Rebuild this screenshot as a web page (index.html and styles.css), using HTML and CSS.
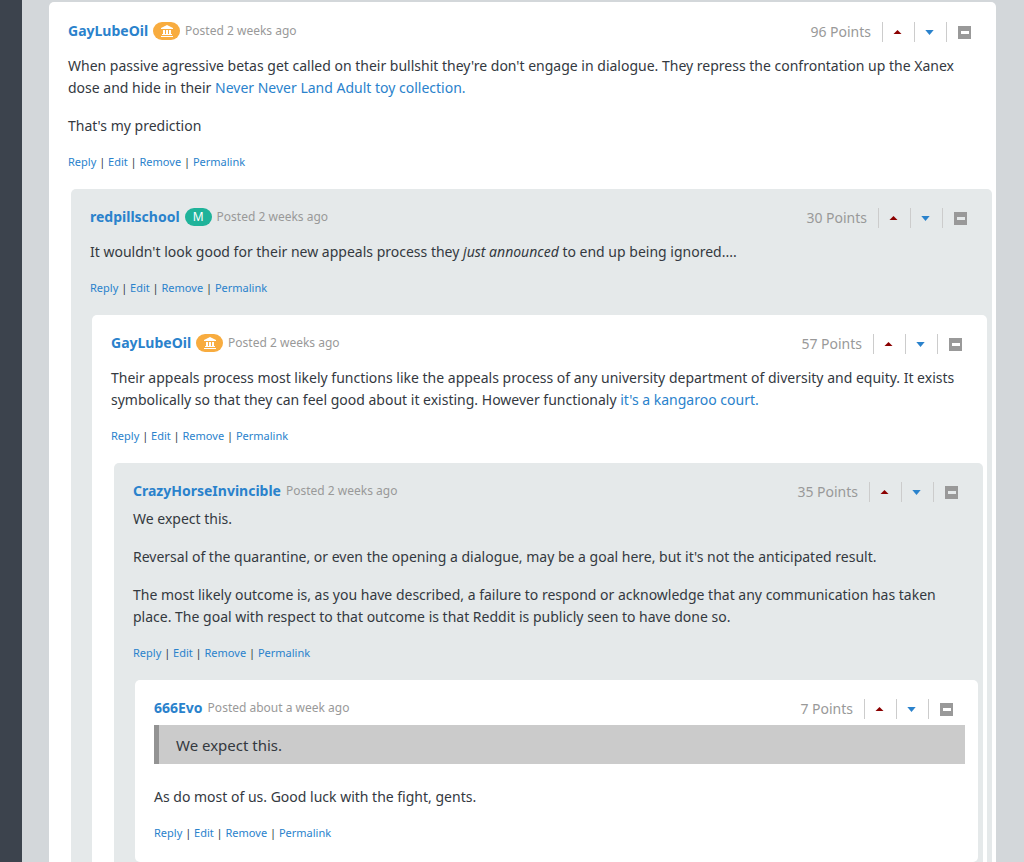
FILE: index.html
```html
<!DOCTYPE html>
<html lang="en">
  <head>
    <meta charset="UTF-8" />
    <meta name="viewport" content="width=device-width, initial-scale=1.0" />
    <title>Comments</title>
    <link rel="stylesheet" href="styles.css">
  </head>
  <body>
    <!-- Icons shared by every comment -->
    <svg class="sprite" aria-hidden="true">
      <symbol id="bank" viewBox="0 0 12 12">
        <path d="M6 0L12 3V4H0V3ZM2 5H4V9H5V5H7V9H8V5H10V9H11V10H1V9H2ZM0 11H12V12H0Z" />
      </symbol>
      <symbol id="up" viewBox="0 0 10 5"><path d="M5 0L10 5H0Z" /></symbol>
      <symbol id="down" viewBox="0 0 10 6"><path d="M0 0H10L5 6Z" /></symbol>
      <symbol id="minus" viewBox="0 0 13 13">
        <path fill-rule="evenodd" d="M0 0H13V13H0ZM3 5V8H11V5Z" />
      </symbol>
    </svg>

    <div class="sidebar"></div>
    <main class="content">
      <article class="comment">
        <header class="comment-header">
          <a class="author" href="#">GayLubeOil</a>
          <span class="badge gold"><svg class="bank"><use href="#bank" /></svg></span>
          <span class="posted">Posted 2 weeks ago</span>
          <div class="votes">
            <span class="points">96 Points</span>
            <button class="up" aria-label="Upvote"><svg><use href="#up" /></svg></button>
            <button class="down" aria-label="Downvote"><svg><use href="#down" /></svg></button>
            <button class="collapse" aria-label="Collapse"><svg><use href="#minus" /></svg></button>
          </div>
        </header>
        <div class="text spaced">
          <p>When passive agressive betas get called on their bullshit they're don't engage in dialogue. They repress the confrontation up the Xanex dose and hide in their <a href="#">Never Never Land Adult toy collection.</a></p>
          <p>That's my prediction</p>
        </div>
        <div class="actions"><a href="#">Reply</a> | <a href="#">Edit</a> | <a href="#">Remove</a> | <a href="#">Permalink</a></div>

        <article class="comment alt">
          <header class="comment-header">
            <a class="author" href="#">redpillschool</a>
            <span class="badge green">M</span>
            <span class="posted">Posted 2 weeks ago</span>
            <div class="votes">
              <span class="points">30 Points</span>
              <button class="up" aria-label="Upvote"><svg><use href="#up" /></svg></button>
              <button class="down" aria-label="Downvote"><svg><use href="#down" /></svg></button>
              <button class="collapse" aria-label="Collapse"><svg><use href="#minus" /></svg></button>
            </div>
          </header>
          <div class="text spaced">
            <p>It wouldn't look good for their new appeals process they <em>just announced</em> to end up being ignored....</p>
          </div>
          <div class="actions"><a href="#">Reply</a> | <a href="#">Edit</a> | <a href="#">Remove</a> | <a href="#">Permalink</a></div>

          <article class="comment">
            <header class="comment-header">
              <a class="author" href="#">GayLubeOil</a>
              <span class="badge gold"><svg class="bank"><use href="#bank" /></svg></span>
              <span class="posted">Posted 2 weeks ago</span>
              <div class="votes">
                <span class="points">57 Points</span>
                <button class="up" aria-label="Upvote"><svg><use href="#up" /></svg></button>
                <button class="down" aria-label="Downvote"><svg><use href="#down" /></svg></button>
                <button class="collapse" aria-label="Collapse"><svg><use href="#minus" /></svg></button>
              </div>
            </header>
            <div class="text spaced">
              <p>Their appeals process most likely functions like the appeals process of any university department of diversity and equity. It exists symbolically so that they can feel good about it existing. However functionaly <a href="#">it's a kangaroo court.</a></p>
            </div>
            <div class="actions"><a href="#">Reply</a> | <a href="#">Edit</a> | <a href="#">Remove</a> | <a href="#">Permalink</a></div>

            <article class="comment alt">
              <header class="comment-header">
                <a class="author" href="#">CrazyHorseInvincible</a>
                <span class="posted">Posted 2 weeks ago</span>
                <div class="votes">
                  <span class="points">35 Points</span>
                  <button class="up" aria-label="Upvote"><svg><use href="#up" /></svg></button>
                  <button class="down" aria-label="Downvote"><svg><use href="#down" /></svg></button>
                  <button class="collapse" aria-label="Collapse"><svg><use href="#minus" /></svg></button>
                </div>
              </header>
              <div class="text">
                <p>We expect this.</p>
                <p>Reversal of the quarantine, or even the opening a dialogue, may be a goal here, but it's not the anticipated result.</p>
                <p>The most likely outcome is, as you have described, a failure to respond or acknowledge that any communication has taken place. The goal with respect to that outcome is that Reddit is publicly seen to have done so.</p>
              </div>
              <div class="actions"><a href="#">Reply</a> | <a href="#">Edit</a> | <a href="#">Remove</a> | <a href="#">Permalink</a></div>

              <article class="comment">
                <header class="comment-header">
                  <a class="author" href="#">666Evo</a>
                  <span class="posted">Posted about a week ago</span>
                  <div class="votes">
                    <span class="points">7 Points</span>
                    <button class="up" aria-label="Upvote"><svg><use href="#up" /></svg></button>
                    <button class="down" aria-label="Downvote"><svg><use href="#down" /></svg></button>
                    <button class="collapse" aria-label="Collapse"><svg><use href="#minus" /></svg></button>
                  </div>
                </header>
                <div class="text">
                  <blockquote>We expect this.</blockquote>
                  <p>As do most of us. Good luck with the fight, gents.</p>
                </div>
                <div class="actions"><a href="#">Reply</a> | <a href="#">Edit</a> | <a href="#">Remove</a> | <a href="#">Permalink</a></div>
              </article>
            </article>
          </article>
        </article>
      </article>
    </main>
  </body>
</html>
```
FILE: styles.css
```css
* {
  box-sizing: border-box;
}
body {
  display: flex;
  min-height: 100vh;
  margin: 0;
  background: #d3d7da;
  color: #34393f;
  font-family: "Noto Sans", "Open Sans", sans-serif;
  font-size: 14px;
  line-height: 22px;
}
a {
  color: #2a82cc;
  text-decoration: none;
}
.sprite {
  position: absolute;
  width: 0;
  height: 0;
}
.sidebar {
  flex: 0 0 22px;
  background: #3c434d;
}
.content {
  flex: 1;
  min-width: 0;
  padding: 2px 28px 20px 27px;
}

/* Comments nest inside each other, shades alternate */
.comment {
  padding: 18px 0 20px;
  background: #fff;
  border-radius: 5px;
}
.comment .comment {
  margin: 18px 5px 0 21px;
  padding-top: 17px;
}
.comment .alt {
  margin-left: 22px;
  margin-right: 4px;
  background: #e5e9ea;
}
.comment-header,
.text,
.actions {
  margin: 0 13px 0 19px;
}
.comment-header {
  display: flex;
  align-items: center;
  gap: 5px;
  height: 22px;
  margin-bottom: 6px;
}
.author {
  font-size: 14px;
  font-weight: bold;
}
.badge {
  display: flex;
  align-items: center;
  justify-content: center;
  width: 27px;
  height: 18px;
  border-radius: 9px;
  color: #fff;
  font-size: 12px;
}
.gold {
  background: #f8ac3f;
}
.green {
  background: #1fb39a;
}
.bank {
  width: 12px;
  height: 12px;
  fill: #fff;
}
.posted {
  color: #999;
  font-size: 12px;
}

/* Points and vote buttons */
.votes {
  display: flex;
  align-items: center;
  margin-left: auto;
  padding-top: 2px;
}
.points {
  margin-right: 11px;
  color: #999;
  font-size: 14px;
}
.votes button {
  display: flex;
  align-items: center;
  justify-content: center;
  width: 32px;
  height: 20px;
  padding: 0 2px 0 0;
  border: 0;
  border-left: 1px solid #ccc;
  background: none;
  cursor: pointer;
}
.votes .collapse {
  width: 37px;
}
.up svg {
  width: 9px;
  height: 4px;
  fill: #8b0000;
}
.down svg {
  width: 9px;
  height: 5px;
  fill: #2a82cc;
}
.collapse svg {
  width: 13px;
  height: 13px;
  fill: #999;
}

.spaced {
  padding-top: 7px;
}
.text p {
  margin: 0 0 16px;
}
.text blockquote {
  margin: 0 0 22px;
  padding: 9px 17px 8px;
  border-left: 5px solid #939393;
  background: #cbcbcb;
  font-size: 15px;
}
.actions {
  font-size: 11px;
  line-height: 18px;
}
```
